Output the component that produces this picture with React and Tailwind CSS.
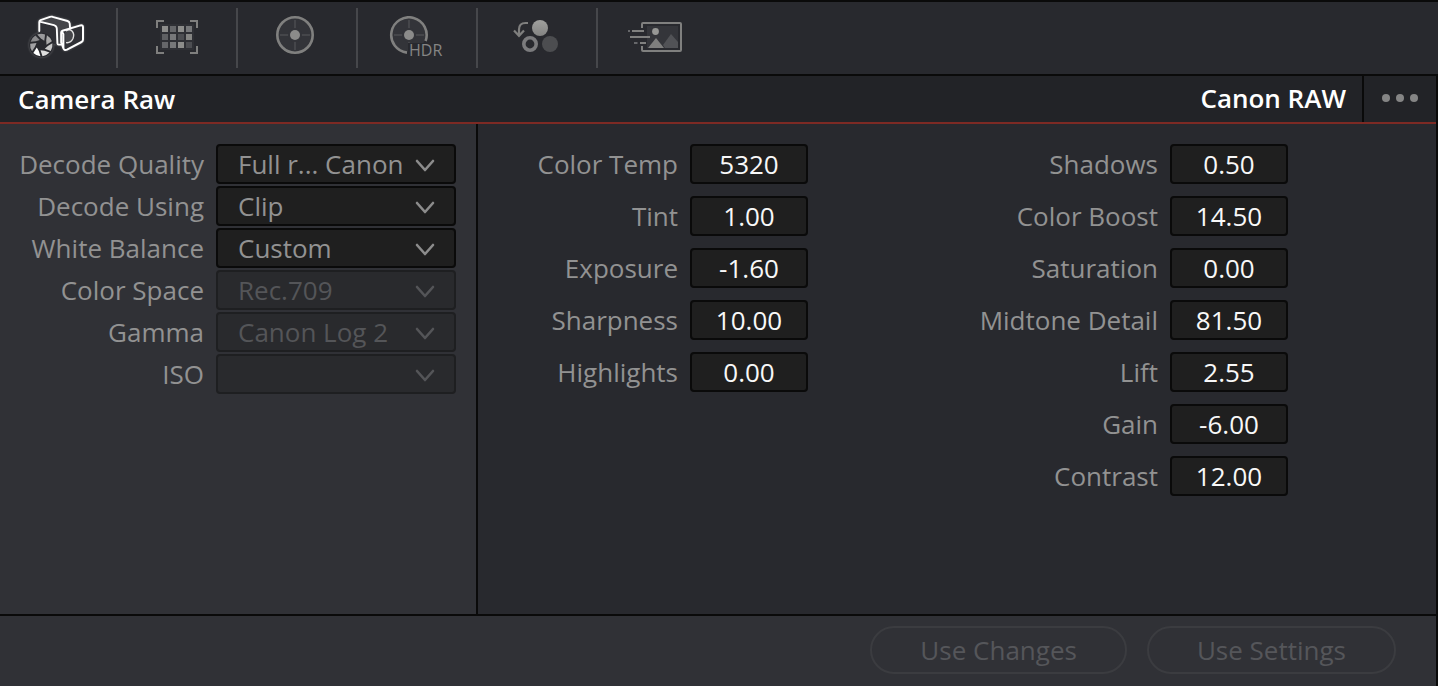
import { useId } from "react";
import clsx from "clsx";

const BLADE_FILLS = ["#a8a8a8", "#c8c8c8", "#dedede", "#ffffff", "#a2a2a4", "#8a8a8c", "#9a9a9c"];

function polar(radius, degrees) {
  const a = (degrees * Math.PI) / 180;
  return `${(41.3 + radius * Math.cos(a)).toFixed(2)} ${(45 + radius * Math.sin(a)).toFixed(2)}`;
}

const BLADES = BLADE_FILLS.map((fill, i) => {
  const start = -60 + (i * 360) / BLADE_FILLS.length;
  return {
    fill,
    d: `M${polar(11.2, start)} A11.2 11.2 0 0 1 ${polar(11.2, start + 41)} L${polar(5.2, start + 56)} L${polar(6.6, start + 18)} Z`,
  };
});

function CameraRawIcon() {
  return (
    <svg
      width="60"
      height="48"
      viewBox="28 14 60 48"
      fill="none"
      className="drop-shadow-[0_0_1px_rgba(255,255,255,0.3)]"
    >
      <path d="M39 21 L51 16.5 L69.5 22.5 V29 L61 32 V45 H57 V27 Z" fill="#45464a" />
      <path d="M39 21 L57 27 V45 L48 42 L39 32 Z" fill="#303136" />
      <path
        d="M39.3 31 V22 Q39.3 20.6 40.6 20.1 L50 16.9 Q51.2 16.5 52.5 16.8 L67.5 21 Q69.5 21.7 69.7 23.5 L70 27.5 M39.6 21.6 L54 25.2 Q56.6 26 56.8 28.5 L57.4 43.5 Q57.5 44.6 58.6 44.6 H61"
        stroke="#fff"
        strokeWidth="1.9"
        strokeLinejoin="round"
        strokeLinecap="round"
      />
      <path
        d="M62.5 30.7 L80.5 25.4 Q83 24.9 83 27.3 V39.5 Q83 41.2 81.5 42 L67 49.7 Q64.6 50.8 63.6 48.6 L61.2 42.5 V32.5 Q61.2 31.1 62.5 30.7 Z"
        fill="#303136"
      />
      <path d="M65 31.5 Q68.5 28.6 71.8 31 Q74.6 34 73 38.5 Q70.6 43.6 65.5 42.5 Z" fill="#45464a" />
      <path d="M66 31 Q69.5 28.6 72 31 Q74.8 34 73 38.5 Q70.6 43.4 66 42.6" stroke="#e2e2e2" strokeWidth="1.4" />
      <path
        d="M62.5 30.7 L80.5 25.4 Q83 24.9 83 27.3 V39.5 Q83 41.2 81.5 42 L67 49.7 Q64.6 50.8 63.6 48.6 L61.2 42.5 V32.5 Q61.2 31.1 62.5 30.7 Z M61.8 31.6 L63.4 34 V48"
        stroke="#fff"
        strokeWidth="2"
        strokeLinejoin="round"
      />
      <circle cx="41.3" cy="45" r="12.2" fill="#28292e" />
      {BLADES.map((blade) => (
        <path key={blade.d} d={blade.d} fill={blade.fill} />
      ))}
    </svg>
  );
}

const CELLS = [
  ["#8d8d8b", "#66676a", "#8d8d8b", "#77787a"],
  ["#5f6063", "#77787a", "#4d4e52", "#858583"],
  ["#66676a", "#77787a", "#8d8d8b", "#4d4e52"],
];

function ColorMatchIcon() {
  return (
    <svg width="42" height="36" viewBox="0 0 42 36" fill="none">
      <rect x="4" y="4" width="34" height="26" fill="#2f3035" />
      <path d="M8 1 H1 V8 M34 1 H41 V8 M1 26 V33 H8 M41 26 V33 H34" stroke="#7f7f7e" strokeWidth="2" />
      {CELLS.map((row, r) =>
        row.map((fill, c) => <rect key={`${r}-${c}`} x={6 + c * 8} y={6 + r * 8} width="6" height="6" fill={fill} />)
      )}
    </svg>
  );
}

function WheelIcon() {
  return (
    <svg width="42" height="44" viewBox="0 0 42 44" fill="none">
      <circle cx="19" cy="19" r="17.7" fill="#333439" stroke="#80807f" strokeWidth="2.6" />
      <path d="M19 4 V34 M4 19 H34" stroke="#45464a" strokeWidth="2" />
      <circle cx="19" cy="19" r="7" fill="#333439" />
      <circle cx="19" cy="19" r="5" fill="#8b8b8a" />
    </svg>
  );
}

function HdrWheelIcon() {
  return (
    <svg width="60" height="44" viewBox="0 0 60 44" fill="none">
      <circle cx="22" cy="19" r="16.5" fill="#333439" />
      <path d="M22 4 V34 M7 19 H37" stroke="#45464a" strokeWidth="2" />
      <path d="M20 36.6 A17.7 17.7 0 1 1 38.6 25" stroke="#80807f" strokeWidth="2.6" />
      <circle cx="22" cy="19" r="7" fill="#333439" />
      <circle cx="22" cy="19" r="5" fill="#8b8b8a" />
      <path d="M21 44 V27 H40 V44 Z" fill="#28292e" />
      <text x="22" y="40" fill="#858584" fontFamily="'Open Sans', sans-serif" fontSize="16" fontWeight="500">
        HDR
      </text>
    </svg>
  );
}

function RgbMixerIcon() {
  const id = useId();
  return (
    <svg width="48" height="38" viewBox="0 0 48 38" fill="none">
      <defs>
        <linearGradient id={id} x1="0" y1="0" x2="0" y2="1">
          <stop offset="0" stopColor="#a0a09e" />
          <stop offset="1" stopColor="#838382" />
        </linearGradient>
      </defs>
      <path d="M15 4 H12.5 Q6 4 6 10.5 V17 M1 11.5 L6 16.8 L11 11.5" stroke="#7f7f7e" strokeWidth="2.2" />
      <circle cx="27" cy="9" r="8" fill={`url(#${id})`} />
      <circle cx="17" cy="25" r="6.2" stroke="#7b7b7d" strokeWidth="3.6" />
      <circle cx="37" cy="25" r="8" fill="#4c4d50" />
    </svg>
  );
}

function MotionEffectsIcon() {
  return (
    <svg width="62" height="34" viewBox="0 0 62 34" fill="none">
      <rect x="20" y="5" width="31" height="22" fill="#34353a" />
      <path
        d="M15 7 V3 Q15 2 16 2 H53 Q54 2 54 3 V29 Q54 30 53 30 H16 Q15 30 15 29 V25"
        stroke="#80807f"
        strokeWidth="2"
      />
      <path d="M36 24 L44 13 L51 21 V27 H38 Z" fill="#515256" />
      <path d="M21 27 L29 17 L37 27 Z" fill="#7f7f7e" />
      <circle cx="28.5" cy="10.5" r="3.4" fill="#979795" />
      <path d="M5 10 H17 M3 16 H23 M13 22 H19" stroke="#80807f" strokeWidth="2" />
      <path d="M1 10 H3 M7 22 H10.5" stroke="#66676a" strokeWidth="2" />
    </svg>
  );
}

const TOOLS = [
  { name: "Camera Raw", icon: <CameraRawIcon /> },
  { name: "Color Match", icon: <ColorMatchIcon /> },
  { name: "Color Wheels", icon: <WheelIcon /> },
  { name: "HDR Wheels", icon: <HdrWheelIcon /> },
  { name: "RGB Mixer", icon: <RgbMixerIcon /> },
  { name: "Motion Effects", icon: <MotionEffectsIcon /> },
];

const DECODE = [
  { label: "Decode Quality", value: "Full r... Canon" },
  { label: "Decode Using", value: "Clip" },
  { label: "White Balance", value: "Custom" },
  { label: "Color Space", value: "Rec.709", disabled: true },
  { label: "Gamma", value: "Canon Log 2", disabled: true },
  { label: "ISO", value: "", disabled: true },
];

const ADJUSTMENTS = [
  [
    ["Color Temp", "5320"],
    ["Tint", "1.00"],
    ["Exposure", "-1.60"],
    ["Sharpness", "10.00"],
    ["Highlights", "0.00"],
  ],
  [
    ["Shadows", "0.50"],
    ["Color Boost", "14.50"],
    ["Saturation", "0.00"],
    ["Midtone Detail", "81.50"],
    ["Lift", "2.55"],
    ["Gain", "-6.00"],
    ["Contrast", "12.00"],
  ],
];

function SelectRow({ label, value, disabled }) {
  const id = useId();
  return (
    <div className="flex items-center gap-3">
      <label htmlFor={id} className="flex-1 whitespace-nowrap text-right text-[#929292]">
        {label}
      </label>
      <div className="relative w-60">
        <select
          id={id}
          disabled={disabled}
          className={clsx(
            "block h-10 w-full appearance-none rounded-[4px] border-2 pr-12 pl-5 opacity-100",
            disabled
              ? "border-[#1e1f21] bg-[#292a2d] text-[#545558]"
              : "border-[#0a0a0a] bg-[#1f1f1f] text-[#929292]"
          )}
        >
          <option>{value}</option>
        </select>
        <svg
          width="20"
          height="14"
          viewBox="0 0 20 14"
          fill="none"
          className={clsx(
            "pointer-events-none absolute top-[15px] right-[21px]",
            disabled ? "text-[#545558]" : "text-[#8c8c8c]"
          )}
        >
          <path d="M2 2 L10 11 L18 2" stroke="currentColor" strokeWidth="2.6" strokeLinecap="round" strokeLinejoin="round" />
        </svg>
      </div>
    </div>
  );
}

function NumberRow({ label, value }) {
  const id = useId();
  return (
    <div className="flex items-center gap-3">
      <label htmlFor={id} className="w-50 whitespace-nowrap text-right text-[#929292]">
        {label}
      </label>
      <input
        id={id}
        type="text"
        inputMode="decimal"
        defaultValue={value}
        className="h-10 w-[118px] rounded-[4px] border-2 border-[#0a0a0a] bg-[#1f1f1f] text-center text-[#f8f8f8]"
      />
    </div>
  );
}

export default function App() {
  return (
    <div className="flex min-h-screen flex-col bg-[#28292e] font-['Open_Sans',sans-serif] text-[26px] leading-9">
      <nav className="flex h-19 border-y-2 border-[#0a0a0a] py-1.5">
        {TOOLS.map((tool, i) => (
          <button
            key={tool.name}
            type="button"
            aria-label={tool.name}
            className={clsx(
              "flex h-15 items-center justify-center border-[#46474b]",
              i === 0 ? "w-[118px]" : "w-30",
              i < TOOLS.length - 1 && "border-r-2"
            )}
          >
            {tool.icon}
          </button>
        ))}
      </nav>

      <main className="flex flex-1 flex-col border-r-2 border-[#0a0a0a]">
        <header className="flex h-12 border-b-2 border-[#7d2a24] bg-[#222327] font-semibold text-white">
          <h1 className="flex flex-1 items-center pl-[18px]">Camera Raw</h1>
          <h2 className="flex items-center pr-4 pb-0.5">Canon RAW</h2>
          <button
            type="button"
            aria-label="More options"
            className="flex w-[74px] items-center justify-center gap-1.5 border-l-2 border-[#0a0a0a] pb-0.5"
          >
            <span className="size-2 rounded-full bg-[#858585]" />
            <span className="size-2 rounded-full bg-[#858585]" />
            <span className="size-2 rounded-full bg-[#858585]" />
          </button>
        </header>

        <div className="flex flex-1">
          <section className="flex w-[478px] flex-col gap-0.5 border-r-2 border-[#0a0a0a] bg-[#303136] py-5 pr-5">
            {DECODE.map((row) => (
              <SelectRow key={row.label} {...row} />
            ))}
          </section>
          <section className="grid flex-1 grid-cols-2 gap-x-0.5 py-5">
            {ADJUSTMENTS.map((column) => (
              <div key={column[0][0]} className="flex flex-col gap-3">
                {column.map(([label, value]) => (
                  <NumberRow key={label} label={label} value={value} />
                ))}
              </div>
            ))}
          </section>
        </div>

        <footer className="flex h-18 justify-end gap-5 border-t-2 border-[#0a0a0a] bg-[#303136] pt-2.5 pr-10">
          {["Use Changes", "Use Settings"].map((text) => (
            <button
              key={text}
              type="button"
              disabled
              className="h-12 rounded-full border-2 border-[#3b3c40] px-12 text-[#55565a]"
            >
              {text}
            </button>
          ))}
        </footer>
      </main>
    </div>
  );
}
